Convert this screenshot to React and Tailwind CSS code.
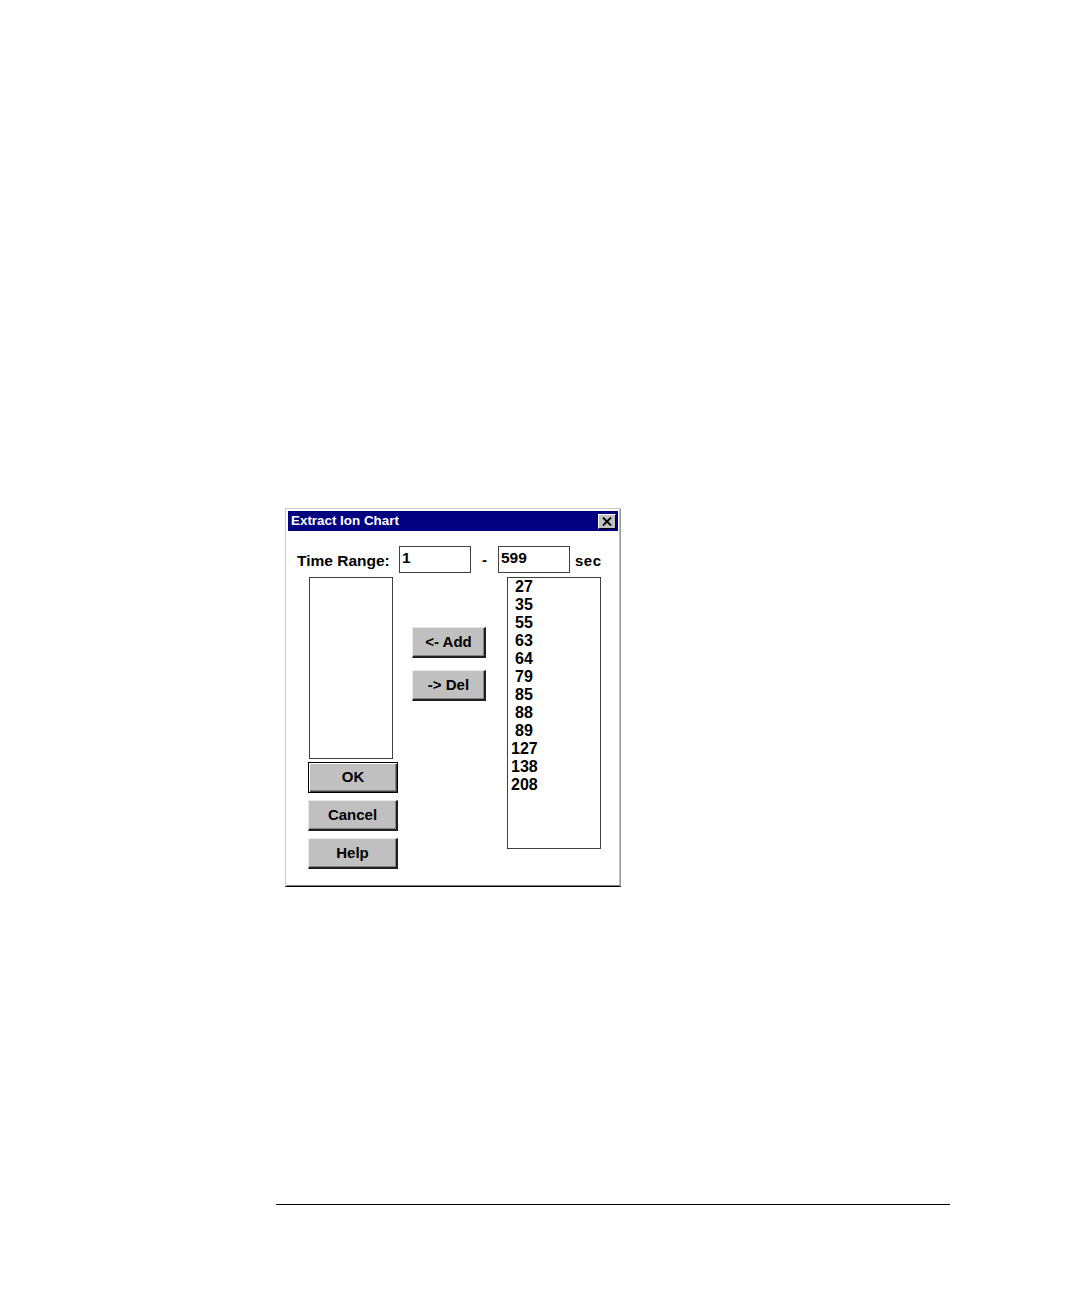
import React from "react";

const font = { fontFamily: '"Liberation Sans", Arial, sans-serif' };

function Btn({ children, isDefault = false, className = "" }) {
  return (
    <div
      className={
        "bg-[#c0c0c0] flex items-center justify-center text-[15px] font-bold text-black " +
        (isDefault
          ? "border border-black shadow-[inset_1px_1px_0_#ffffff,inset_-1px_-1px_0_#404040,inset_-2px_-2px_0_#808080] "
          : "border-t border-l border-t-[#e8e8e8] border-l-[#e8e8e8] border-b-2 border-r-2 border-b-[#202020] border-r-[#202020] shadow-[inset_-1px_-1px_0_#808080] ") +
        className
      }
    >
      {children}
    </div>
  );
}

export default function App() {
  const items = ["27", "35", "55", "63", "64", "79", "85", "88", "89", "127", "138", "208"];
  return (
    <div className="w-[1080px] h-[1298px] bg-white pt-[508px]" style={font}>
      {/* Dialog */}
      <div className="ml-[285px] w-[336px] h-[379px] border border-t-[#c8c8c8] border-l-[#c8c8c8] border-b-black border-r-[#9a9a9a] bg-white">
        <div className="h-full border border-t-white border-l-white border-b-[#808080] border-r-[#c0c0c0] p-px flex flex-col">
          {/* Title bar */}
          <div className="h-[20px] bg-[#000080] flex items-center justify-between pl-[3px] pr-[2px]">
            <span className="text-white font-bold text-[13.4px] leading-none">Extract Ion Chart</span>
            <div className="w-[18px] h-[15px] bg-[#c0c0c0] border-t border-l border-t-white border-l-white border-b border-r border-b-black border-r-black flex items-center justify-center">
              <svg width="10" height="9" viewBox="0 0 10 9">
                <path d="M1 0.5 L9 8.5 M9 0.5 L1 8.5" stroke="#000" strokeWidth="1.8" />
              </svg>
            </div>
          </div>
          {/* Body */}
          <div className="flex-1 bg-white pt-[15px]">
            {/* Time Range row */}
            <div className="flex items-center h-[27px]">
              <span className="ml-[9px] w-[102px] text-[15.5px] font-bold text-black leading-none pt-[2px]">Time Range:</span>
              <div className="w-[72px] h-[27px] border border-[#404040] pl-[2px] pt-[2px] text-[15.5px] font-bold leading-[18px]">1</div>
              <span className="w-[27px] text-center text-[15px] font-bold leading-none">-</span>
              <div className="w-[72px] h-[27px] border border-[#404040] pl-[2px] pt-[2px] text-[15.5px] font-bold leading-[18px]">599</div>
              <span className="ml-[5px] text-[15px] font-bold leading-none tracking-[0.5px] pt-[2px]">sec</span>
            </div>
            {/* Main row */}
            <div className="flex mt-[4px]">
              {/* Left column */}
              <div className="ml-[20px] w-[90px] flex flex-col">
                <div className="ml-px w-[84px] h-[182px] border border-[#404040]"></div>
                <Btn isDefault className="mt-[3px] h-[31px]">OK</Btn>
                <Btn className="mt-[7px] h-[31px]">Cancel</Btn>
                <Btn className="mt-[7px] h-[31px]">Help</Btn>
              </div>
              {/* Middle column */}
              <div className="ml-[14px] w-[74px] flex flex-col pt-[50px]">
                <Btn className="h-[31px]">&lt;- Add</Btn>
                <Btn className="mt-[12px] h-[31px]">-&gt; Del</Btn>
              </div>
              {/* Right column */}
              <div className="ml-[21px] w-[94px] h-[272px] border border-[#404040] pl-[3px]">
                {items.map((it) => (
                  <div
                    key={it}
                    className={
                      "h-[18px] leading-[18px] text-[16px] font-bold text-black " +
                      (it.length === 2 ? "pl-[4px]" : "pl-0")
                    }
                  >
                    {it}
                  </div>
                ))}
              </div>
            </div>
          </div>
        </div>
      </div>
      {/* Footer rule */}
      <div className="ml-[276px] mt-[317px] w-[674px] h-px bg-black"></div>
    </div>
  );
}
